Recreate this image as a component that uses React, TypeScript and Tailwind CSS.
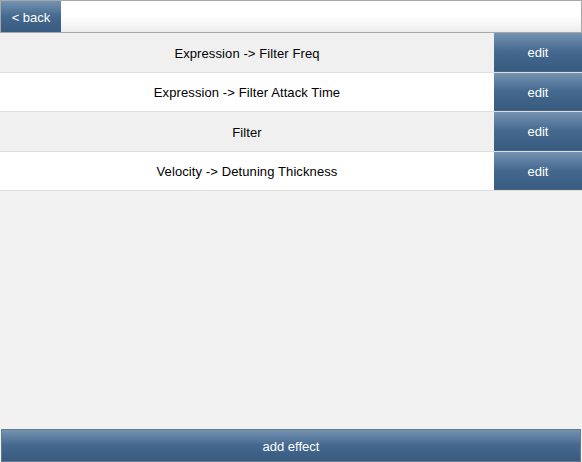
import React from 'react';

const effects = [
  'Expression -> Filter Freq',
  'Expression -> Filter Attack Time',
  'Filter',
  'Velocity -> Detuning Thickness',
];

const blueBtn = 'bg-gradient-to-b from-[#7593b2] via-[#44688e] to-[#385b80] text-white';

export default function App() {
  return (
    <div className="w-[582px] h-[462px] flex flex-col bg-[#f2f2f2] font-['Liberation_Sans',Arial,sans-serif] text-[13px] overflow-hidden">
      {/* Header */}
      <div className="h-[33px] flex border border-[#a8a8a8] bg-gradient-to-b from-white via-white to-[#ececec]">
        <button className={`w-[60px] h-full pt-[2px] ${blueBtn} text-[13px] leading-none`}>&lt; back</button>
        <div className="flex-1" />
      </div>

      {/* List */}
      <div className="flex flex-col">
        {effects.map((name, i) => (
          <div
            key={name}
            className={`flex border-b border-[#dedede] ${i % 2 === 0 ? 'bg-[#f0f0f0] h-[40px]' : 'bg-white h-[39px]'}`}
          >
            <div className="flex-1 flex items-center justify-center pt-[2px] text-black tracking-[0.1px]">{name}</div>
            <button className={`w-[88px] h-full pt-[2px] ${blueBtn} border-b border-[#4a6480] -mb-px text-[13px]`}>edit</button>
          </div>
        ))}
      </div>

      <div className="flex-1" />

      {/* Footer */}
      <button className={`h-[33px] mx-px border border-[#6b7a8a] pt-[2px] ${blueBtn} text-[13px]`}>add effect</button>
    </div>
  );
}
